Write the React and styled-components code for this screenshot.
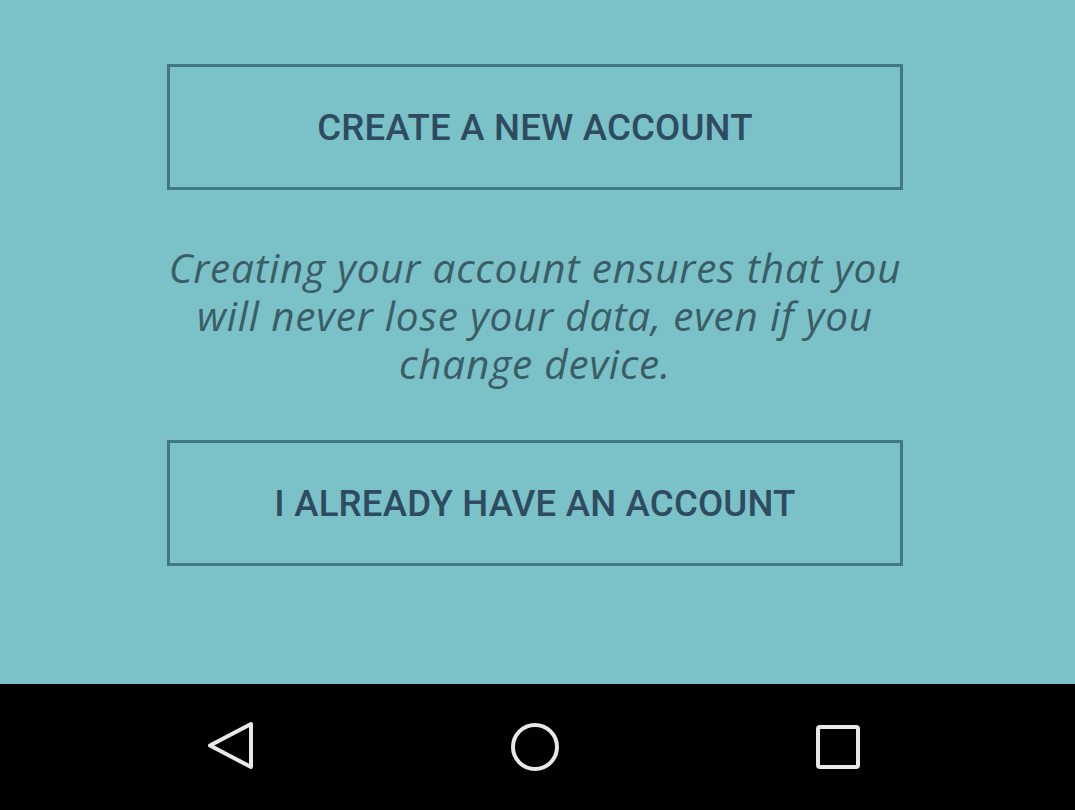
import React from "react";
import styled, { createGlobalStyle } from "styled-components";

const Global = createGlobalStyle`
  html, body { margin: 0; padding: 0; background: #7bc1c8; }
  #root { width: 1075px; height: 810px; }
`;

const Screen = styled.div`
  width: 1075px;
  height: 810px;
  display: flex;
  flex-direction: column;
  background: #7bc1c8;
`;

const Content = styled.main`
  flex: 1;
  display: flex;
  flex-direction: column;
  align-items: center;
  padding: 64px 5px 0 0;
  box-sizing: border-box;
`;

const OutlineButton = styled.button`
  width: 736px;
  height: 126px;
  box-sizing: border-box;
  border: 3px solid #427786;
  background: transparent;
  color: #2e4b5f;
  font-family: Roboto, "Liberation Sans", sans-serif;
  font-weight: 500;
  font-size: 36.6px;
  letter-spacing: 0.2px;
  text-transform: uppercase;
  display: flex;
  align-items: center;
  justify-content: center;
  padding: 0;
  cursor: pointer;
`;

const Note = styled.p`
  margin: 54px 0 52px;
  width: 780px;
  text-align: center;
  font-family: "Open Sans", "DejaVu Sans", sans-serif;
  font-style: italic;
  font-size: 40.5px;
  letter-spacing: 0.8px;
  line-height: 48px;
  color: #3b5d66;
`;

const NavBar = styled.nav`
  height: 126px;
  background: #000;
  display: flex;
  align-items: center;
  justify-content: space-between;
  padding: 0 211px 0 204px;
`;

const NavIcon = styled.svg`
  width: 52px;
  height: 52px;
  display: block;
`;

export default function App() {
  return (
    <>
      <Global />
      <Screen>
        <Content>
          <OutlineButton>Create a new account</OutlineButton>
          <Note>
            Creating your account ensures that you will never lose your data,
            even if you change device.
          </Note>
          <OutlineButton>I already have an account</OutlineButton>
        </Content>
        <NavBar>
          <NavIcon viewBox="0 0 52 52">
            <path
              d="M47 3 L47 46 L6 24.5 Z"
              fill="none"
              stroke="#e8e8e8"
              strokeWidth="4"
              strokeLinejoin="round"
            />
          </NavIcon>
          <NavIcon viewBox="0 0 52 52">
            <circle cx="27" cy="26" r="22" fill="none" stroke="#e8e8e8" strokeWidth="4" />
          </NavIcon>
          <NavIcon viewBox="0 0 52 52">
            <rect x="6" y="6" width="40" height="40" rx="2" fill="none" stroke="#e8e8e8" strokeWidth="4" />
          </NavIcon>
        </NavBar>
      </Screen>
    </>
  );
}
